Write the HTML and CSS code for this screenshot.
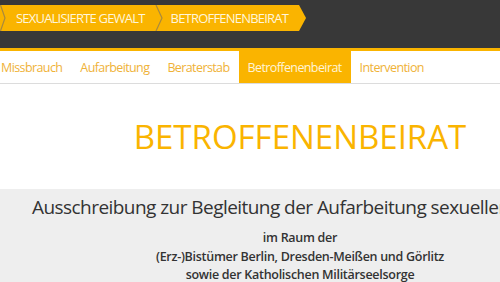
FILE: index.html
```html
<!DOCTYPE html>
<html lang="de">
<head>
  <meta charset="UTF-8" />
  <meta name="viewport" content="width=device-width, initial-scale=1.0"/>
  <title>Betroffenenbeirat</title>
  <link rel="stylesheet" href="styles.css">
</head>
<body>
<div class="page">
  <div class="topbar">
    <div class="crumbs">
      <svg class="sep" width="8" height="26" viewBox="0 0 8 26"><polyline points="0.5,0 5,13 0.5,26" /></svg>
      <a class="crumb" href="#">Sexualisierte Gewalt</a>
      <svg class="sep" width="8" height="26" viewBox="0 0 8 26"><polyline points="1,0 7,13 1,26" /></svg>
      <a class="crumb last" href="#">Betroffenenbeirat</a>
    </div>
  </div>

  <nav class="menu">
    <a href="#">Missbrauch</a>
    <a href="#">Aufarbeitung</a>
    <a href="#">Beraterstab</a>
    <a href="#" class="active">Betroffenenbeirat</a>
    <a href="#">Intervention</a>
  </nav>

  <div class="hero">
    <h1>BETROFFENENBEIRAT</h1>
  </div>

  <div class="content">
    <h2>Ausschreibung zur Begleitung der Aufarbeitung sexueller Gewalt</h2>
    <p class="region">
      im Raum der<br>
      (Erz-)Bistümer Berlin, Dresden-Meißen und Görlitz<br>
      sowie der Katholischen Militärseelsorge
    </p>
  </div>
</div>
</body>
</html>
```

FILE: styles.css
```css
* { box-sizing: border-box; }
html, body { overflow: hidden; }
body {
  margin: 0;
  font-family: "Open Sans", Lato, sans-serif;
  background-color: #fff;
  color: #333;
}
.page {
  width: 600px;
}
.topbar {
  background-color: #383838;
  height: 51px;
  padding-top: 5px;
  border-bottom: 3px solid #fab400;
}
.crumbs {
  display: flex;
  height: 26px;
}
.sep {
  flex: none;
  background-color: #fab400;
}
.sep polyline {
  fill: none;
  stroke: #a98a3c;
  stroke-width: 1.2;
}
.crumb {
  display: flex;
  align-items: center;
  padding: 0 10px 0 8px;
  background-color: #fab400;
  color: #fff6dc;
  text-decoration: none;
  text-transform: uppercase;
  font-size: 13px;
  letter-spacing: -0.8px;
  white-space: nowrap;
}
.crumb.last {
  padding-right: 18px;
  clip-path: polygon(0 0, calc(100% - 7px) 0, 100% 50%, calc(100% - 7px) 100%, 0 100%);
}
.menu {
  display: flex;
  height: 33px;
  margin-left: -8px;
  border-bottom: 1px solid #dcdcdc;
}
.menu a {
  display: flex;
  align-items: center;
  padding: 0 9px;
  color: #efb238;
  text-decoration: none;
  font-size: 12.5px;
  letter-spacing: -0.6px;
  white-space: nowrap;
}
.menu a.active {
  background-color: #fab400;
  color: #fff4d8;
}
.hero {
  height: 105px;
  display: flex;
  align-items: center;
  justify-content: center;
}
.hero h1 {
  margin: 0;
  font-weight: normal;
  font-size: 33px;
  color: #fab400;
}
.content {
  background-color: #eeeeee;
  padding: 4px 0 20px;
  text-align: center;
}
.content h2 {
  margin: 0;
  font-weight: normal;
  font-size: 19px;
  letter-spacing: -0.55px;
  line-height: 28px;
  color: #333;
  white-space: nowrap;
}
.region {
  margin: 8px 0 0;
  font-weight: 600;
  font-size: 12.5px;
  letter-spacing: -0.28px;
  line-height: 18.5px;
  color: #333;
}
```
